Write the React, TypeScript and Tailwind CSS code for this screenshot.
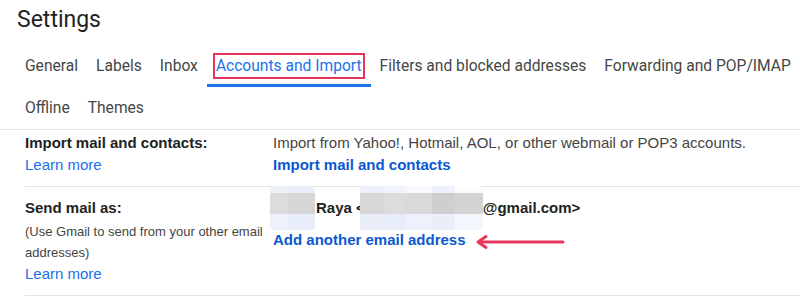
import React from "react";

function Tab({ label, active = false, boxed = false }: { label: string; active?: boolean; boxed?: boolean }) {
  return (
    <div
      className={
        "h-[40px] pt-[1px] px-[9px] shrink-0 whitespace-nowrap flex items-center border-b-[3px] " +
        (active ? "border-[#1a73e8] text-[#1a73e8]" : "border-transparent text-[#444746]")
      }
    >
      {boxed ? (
        <span className="border-2 border-[#e6365c] mx-[-3px] px-[1px] py-[1px] leading-[20px]">{label}</span>
      ) : (
        <span className="leading-[20px]">{label}</span>
      )}
    </div>
  );
}

function BlurBlock1() {
  return (
    <div className="flex h-[44px] w-[45px] shrink-0 rounded-[3px] overflow-hidden">
      <div className="flex flex-col w-[18px]">
        <div className="h-[7px] bg-[#eef1f8]" />
        <div className="h-[21px] bg-[#dcdcdc]" />
        <div className="h-[16px] bg-[#eef2fb]" />
      </div>
      <div className="flex flex-col w-[27px]">
        <div className="h-[7px] bg-[#e9eef9]" />
        <div className="h-[21px] bg-[#d6d6d6]" />
        <div className="h-[16px] bg-[#e6ecf8]" />
      </div>
    </div>
  );
}

function BlurBlock2() {
  return (
    <div className="flex h-[44px] w-[123px] shrink-0 ml-[-5px] rounded-[3px] overflow-hidden">
      <div className="flex flex-col w-[25px]">
        <div className="h-[7px] bg-[#eef1fa]" />
        <div className="h-[21px] bg-[#d8d8d8]" />
        <div className="h-[16px] bg-[#e9eef9]" />
      </div>
      <div className="flex flex-col w-[20px]">
        <div className="h-[7px] bg-[#f0f3fb]" />
        <div className="h-[21px] bg-[#dcdcdc]" />
        <div className="h-[16px] bg-[#e6ecf8]" />
      </div>
      <div className="flex flex-col w-[27px]">
        <div className="h-[7px] bg-[#f8f9fd]" />
        <div className="h-[21px] bg-[#d9d9d9]" />
        <div className="h-[16px] bg-[#edf1fb]" />
      </div>
      <div className="flex flex-col w-[23px]">
        <div className="h-[7px] bg-[#eef1fa]" />
        <div className="h-[21px] bg-[#cfcfcf]" />
        <div className="h-[16px] bg-[#e9eef9]" />
      </div>
      <div className="flex flex-col w-[28px]">
        <div className="h-[7px] bg-[#fbfcfe]" />
        <div className="h-[21px] bg-[#d3d3d3]" />
        <div className="h-[16px] bg-[#f3f6fc]" />
      </div>
    </div>
  );
}

export default function App() {
  return (
    <div className="w-[800px] h-[306px] bg-white overflow-hidden font-['Liberation_Sans',Arial,sans-serif]">
      <h1 className="pl-[17px] pt-[6px] pb-[13px] leading-[28px] text-[23px] text-[#1f1f1f] font-['Roboto',sans-serif] font-normal">
        Settings
      </h1>
      <div className="pl-[16px] font-['Roboto',sans-serif] text-[15.6px]">
        <div className="flex">
          <Tab label="General" />
          <Tab label="Labels" />
          <Tab label="Inbox" />
          <Tab label="Accounts and Import" active boxed />
          <Tab label="Filters and blocked addresses" />
          <Tab label="Forwarding and POP/IMAP" />
        </div>
        <div className="flex mt-[2px]">
          <Tab label="Offline" />
          <Tab label="Themes" />
        </div>
      </div>
      <div className="border-t border-[#e6e6e6]">
        <div className="ml-[25px] flex border-b border-[#e3e3e3] pt-[2px] pb-[10px] text-[15px] leading-[22px]">
          <div className="w-[248px] shrink-0">
            <div className="font-bold text-[#222]">Import mail and contacts:</div>
            <div className="text-[#1a6fe6]">Learn more</div>
          </div>
          <div>
            <div className="text-[#444]">Import from Yahoo!, Hotmail, AOL, or other webmail or POP3 accounts.</div>
            <div className="font-bold text-[#0b57d0]">Import mail and contacts</div>
          </div>
        </div>
        <div className="ml-[25px] flex border-b border-[#e3e3e3] pt-[10px] pb-[10px] text-[15px] leading-[22px]">
          <div className="w-[248px] shrink-0">
            <div className="font-bold text-[#222]">Send mail as:</div>
            <div className="mt-[2px] text-[13px] leading-[21px] text-[#444] whitespace-nowrap">
              (Use Gmail to send from your other email
              <br />
              addresses)
            </div>
            <div className="text-[#1a6fe6]">Learn more</div>
          </div>
          <div>
            <div className="flex items-center h-[22px] ml-[-3px] font-bold text-[#222]">
              <BlurBlock1 />
              <span className="ml-[1px] whitespace-nowrap">Raya &lt;</span>
              <BlurBlock2 />
              <span className="whitespace-nowrap">@gmail.com&gt;</span>
            </div>
            <div className="mt-[10px] flex items-center">
              <span className="font-bold text-[#0b57d0] whitespace-nowrap">Add another email address</span>
              <svg className="ml-[9px] mt-[4px]" width="90" height="16" viewBox="0 0 90 16">
                <line x1="4" y1="8" x2="88" y2="8" stroke="#e6365c" strokeWidth="3" strokeLinecap="round" />
                <polyline
                  points="11,2.5 3,8 11,13.5"
                  fill="none"
                  stroke="#e6365c"
                  strokeWidth="3"
                  strokeLinecap="round"
                  strokeLinejoin="round"
                />
              </svg>
            </div>
          </div>
        </div>
      </div>
    </div>
  );
}
